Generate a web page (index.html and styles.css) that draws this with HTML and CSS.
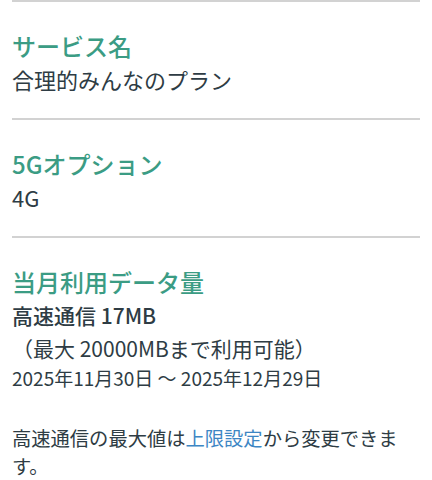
FILE: index.html
```html
<!DOCTYPE html>
<html lang="ja">
<head>
<meta charset="utf-8">
<link rel="stylesheet" href="styles.css">
</head>
<body>
<div class="list">
  <section class="item">
    <h2 class="label">サービス名</h2>
    <p class="value">合理的みんなのプラン</p>
  </section>
  <section class="item">
    <h2 class="label">5Gオプション</h2>
    <p class="value">4G</p>
  </section>
  <section class="item">
    <h2 class="label">当月利用データ量</h2>
    <p class="value strong">高速通信 17MB</p>
    <p class="limit">（最大 20000MBまで利用可能）</p>
    <p class="period">2025年11月30日 〜 2025年12月29日</p>
    <p class="note">高速通信の最大値は<a class="link" href="#">上限設定</a>から変更できます。</p>
  </section>
</div>
</body>
</html>
```

FILE: styles.css
```css
html, body {
  margin: 0;
  padding: 0;
  background: #ffffff;
}
body {
  font-family: "Noto Sans CJK JP", "Noto Sans", sans-serif;
  color: #2e3c44;
}
.list {
  padding: 0 12px;
}
.item {
  border-top: 2px solid #d2d2d2;
  padding: 26px 0 24px;
}
.label {
  margin: 0;
  font-size: 24px;
  line-height: 36px;
  font-weight: 500;
  color: #3b9c84;
}
.value {
  margin: 0;
  font-size: 22px;
  line-height: 30px;
  font-weight: 400;
}
.value.strong {
  font-size: 21px;
  font-weight: 500;
}
.limit {
  margin: 3px 0 0;
  font-size: 21px;
  line-height: 30px;
}
.period {
  margin: 0;
  font-size: 19px;
  line-height: 29px;
}
.note {
  margin: 32px 0 0;
  font-size: 19.3px;
  line-height: 28px;
  width: 400px;
}
.link {
  color: #3d86c4;
  text-decoration: none;
}
```
